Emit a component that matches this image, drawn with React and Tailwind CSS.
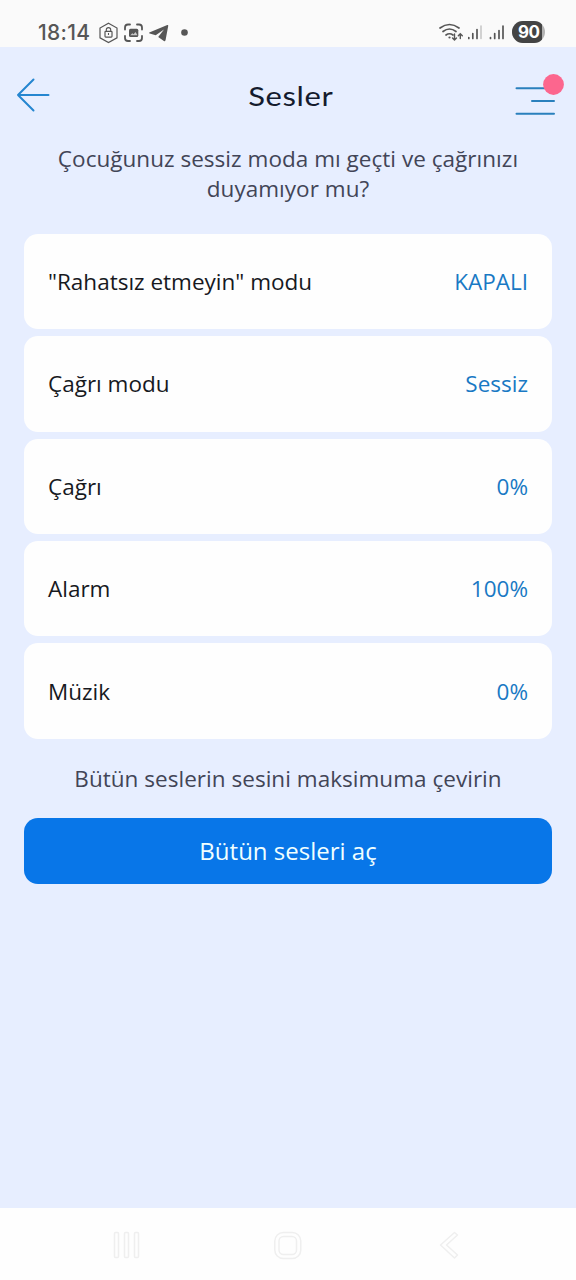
const rows = [
  { label: '"Rahatsız etmeyin" modu', value: 'KAPALI' },
  { label: 'Çağrı modu', value: 'Sessiz' },
  { label: 'Çağrı', value: '0%' },
  { label: 'Alarm', value: '100%' },
  { label: 'Müzik', value: '0%' },
];

function StatusBar() {
  return (
    <div className="flex h-[47px] items-start bg-[#fafafa] text-[#565656]">
      <span className="ml-[38px] mt-[19px] w-[52px] whitespace-nowrap font-['Inter',sans-serif] text-[21px] font-medium leading-[28px] tracking-[0.3px]">18:14</span>
      <svg className="h-[47px] w-[105px]" viewBox="90 0 105 47" fill="none" stroke="currentColor" aria-hidden="true">
        <path d="M108.5 23.2 117 28v9.8l-8.5 4.8-8.5-4.8V28Z" strokeWidth="1.2" />
        <rect x="105" y="31.3" width="7" height="5.8" rx=".8" strokeWidth="1.2" />
        <path d="M106.300 31v-1.200a2.200 2.200 0 0 1 4.400 0V31M108.500 33v2" strokeWidth="1.100" />
        <path d="M125 29.5v-2a3 3 0 0 1 3-3h2M137 24.5h2a3 3 0 0 1 3 3v2M142 36v2a3 3 0 0 1-3 3h-2M130 41h-2a3 3 0 0 1-3-3v-2" strokeWidth="1.8" strokeLinecap="round" />
        <rect x="129" y="28.7" width="9.3" height="8.4" rx="1.5" fill="currentColor" stroke="none" />
        <path d="m130.3 35.2 2-2 1.3 1 1.9-2.2 2 3.2Z" fill="#c8c8c8" stroke="none" />
        <path d="m149.3 32.6 18-7.6c.8-.3 1 .2.9.9l-2.600 14.2c-.2 1-.8 1.4-1.7.8l-5.7-4 5.8-7.4-8.3 5.7-6-1.8c-.7-.2-.8-.5-.4-.8Z" fill="currentColor" stroke="none" />
        <circle cx="184.5" cy="32.5" r="3.3" fill="currentColor" stroke="none" />
      </svg>
      <svg className="ml-auto h-[47px] w-[72px]" viewBox="438 0 72 47" fill="none" stroke="currentColor" strokeLinecap="round" aria-hidden="true">
        <path d="M440 28q9.500-7 19 0M443 31.500q6.500-5 13 0M446 35q3.500-2.500 7 0" strokeWidth="1.700" />
        <circle cx="449.500" cy="37.500" r="1.100" fill="currentColor" stroke="none" />
        <path d="M454.500 34v6m-2-2 2 2 2-2M460.300 38.500v-4.700m-2 2 2-2 2 2" strokeWidth="1.400" />
        <path d="M468.800 37.500v1M472.800 33.500v5M477 29.500v9M490.500 37.500v1M494.700 33.500v5M499 30.500v8M503 26v12.500" strokeWidth="1.700" />
        <path d="M481 26v12.500" stroke="#c4c4c4" strokeWidth="1.500" />
      </svg>
      <div className="ml-[2px] mr-[31px] mt-[21px] h-[22px] w-[33px] overflow-hidden rounded-full bg-[#b3b3b3]">
        <div className="h-full w-[30px] bg-[#444] pl-[6px] font-['Inter',sans-serif] text-[17px] font-bold leading-[22px] tracking-[-0.5px] text-white">90</div>
      </div>
    </div>
  );
}

function Header() {
  return (
    <header className="flex h-[97px] items-start">
      <button className="ml-[16px] mt-[30px] w-[40px]" aria-label="Geri">
        <svg className="block h-[36px] w-[36px]" viewBox="0 0 36 36" fill="none" stroke="#2586d0" strokeWidth="2" strokeLinecap="round" strokeLinejoin="round">
          <path d="M32.500 18H2M17.500 2.500 2 18l15.500 15.500" />
        </svg>
      </button>
      <h1 className="mt-[33px] flex-1 origin-center scale-x-[1.17] pl-[9px] text-center font-['Lato',sans-serif] text-[26.5px] font-normal leading-[32px] tracking-[0.5px] text-[#141b2e]">Sesler</h1>
      <button className="mr-[12px] mt-[26px] h-[44px] w-[49px]" aria-label="Menü">
        <svg className="block h-[44px] w-[49px]" viewBox="515 73 49 44" fill="none">
          <path d="M516.500 88.300H546M532 101h22M516.500 113.800H554" stroke="#2a80bd" strokeWidth="2" strokeLinecap="round" />
          <circle cx="553.500" cy="84.500" r="10.400" fill="#fc668e" />
        </svg>
      </button>
    </header>
  );
}

function NavigationBar() {
  return (
    <nav className="flex h-[72px] items-center bg-[#fefefe] pl-[112px] pr-[116px] pt-[2px]">
      <svg className="h-[30px] w-full" viewBox="112 1230 348 30" fill="none" stroke="#efefef" strokeWidth="1.500">
        <rect x="114.500" y="1232.500" width="4" height="25" rx="1" />
        <rect x="124.500" y="1232.500" width="4" height="25" rx="1" />
        <rect x="134.500" y="1232.500" width="4" height="25" rx="1" />
        <rect x="274.800" y="1232.500" width="26" height="26" rx="8.500" />
        <rect x="279" y="1236.500" width="17.500" height="18" rx="4.500" />
        <path d="m454.500 1232.500 3 2.500-11 10 11 10-3 3-14-13Z" strokeLinejoin="round" />
      </svg>
    </nav>
  );
}

export default function App() {
  return (
    <div className="flex h-[1280px] w-[576px] flex-col overflow-hidden bg-[#e7eeff] font-['Open_Sans',sans-serif] text-[22.5px] leading-[30px]">
      <StatusBar />
      <Header />
      <main className="flex flex-1 flex-col px-6">
        <p className="text-center tracking-[0.03px] text-[#424557]">Çocuğunuz sessiz moda mı geçti ve çağrınızı<br />duyamıyor mu?</p>
        <ul className="mt-[29.8px] flex flex-col gap-[6.9px]">
          {rows.map(({ label, value }) => (
            <li key={label} className="flex h-[95.5px] items-center justify-between rounded-[14px] bg-[#fefefe] px-6 pt-[1px]">
              <span className="text-[#17191e]">{label}</span>
              <span className="text-[#1979c4]">{value}</span>
            </li>
          ))}
        </ul>
        <p className="mt-[25px] text-center tracking-[0.03px] text-[#424557]">Bütün seslerin sesini maksimuma çevirin</p>
        <button className="mt-[24px] h-[66px] rounded-[14px] bg-[#0876e8] text-[24px] text-[#f0ffff]">Bütün sesleri aç</button>
      </main>
      <NavigationBar />
    </div>
  );
}
